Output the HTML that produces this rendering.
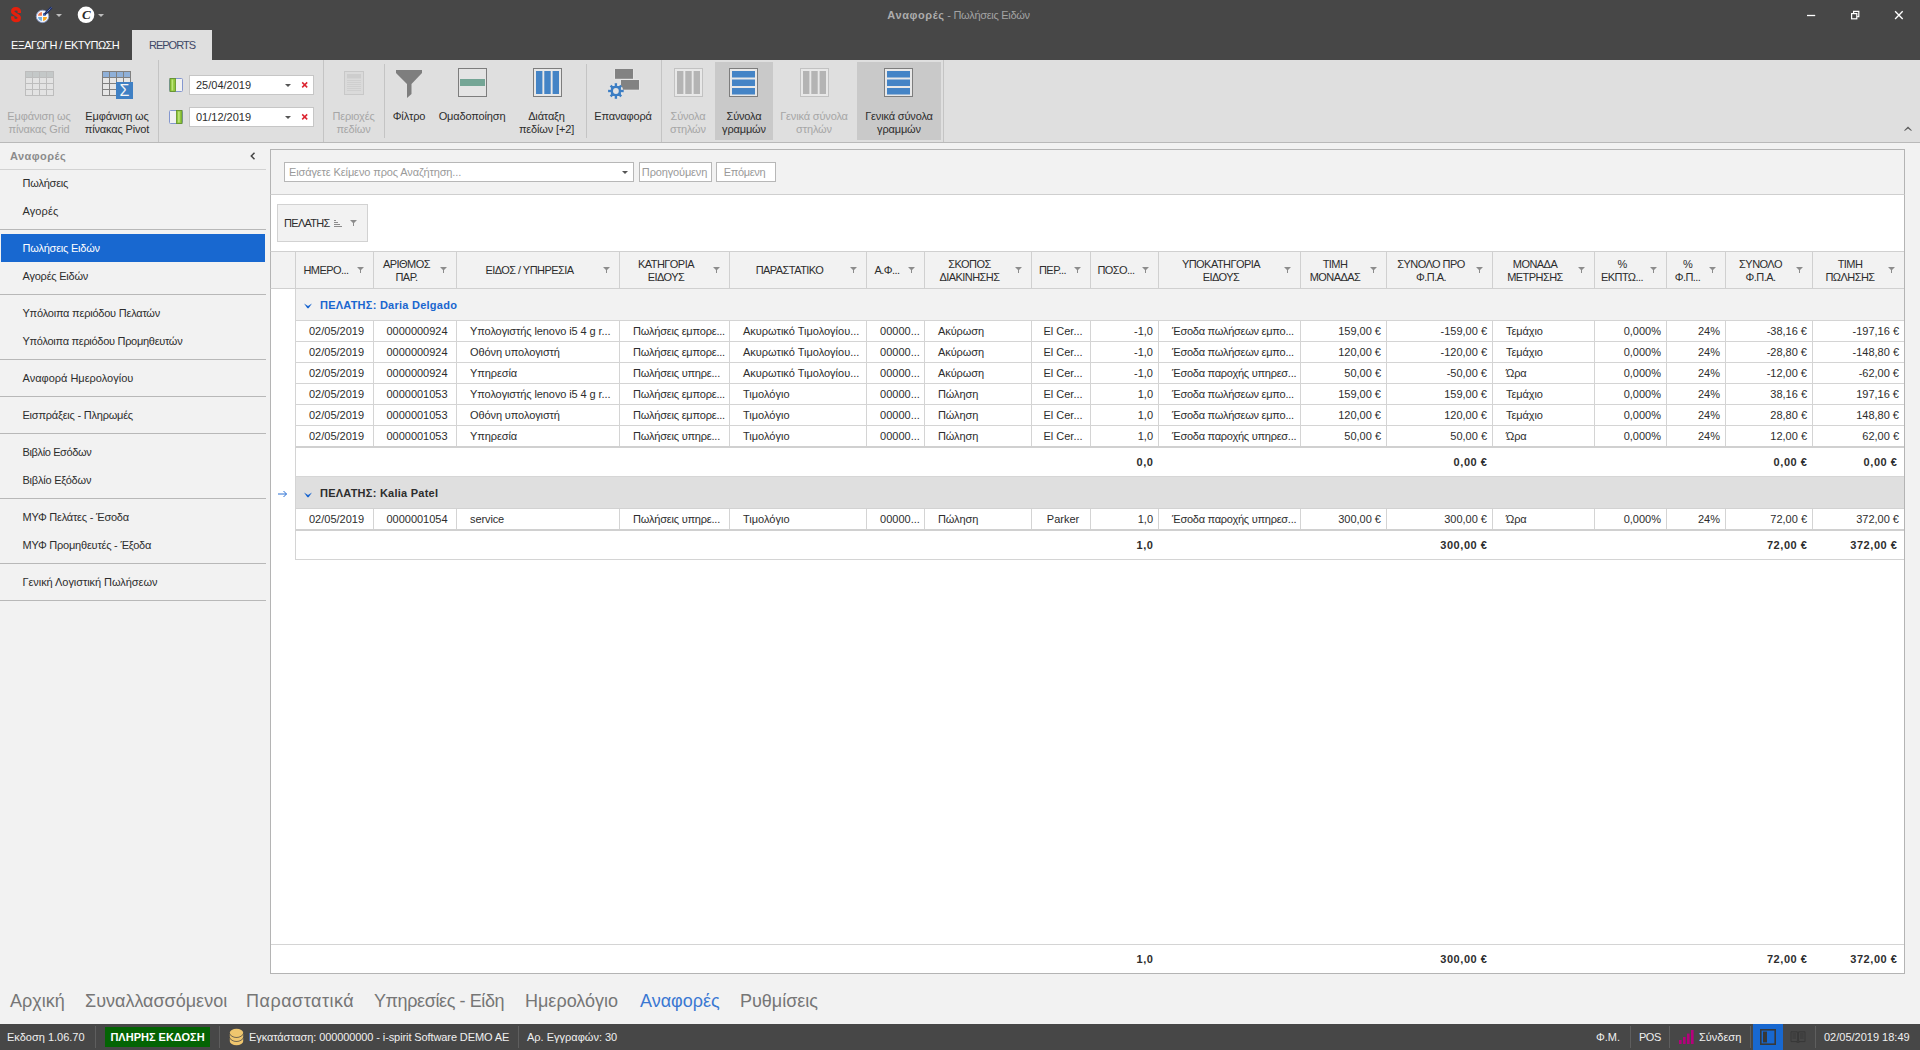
<!DOCTYPE html>
<html lang="el">
<head>
<meta charset="utf-8">
<title>Αναφορές - Πωλήσεις Ειδών</title>
<style>
html,body{margin:0;padding:0}
body{width:1920px;height:1050px;overflow:hidden;background:#f2f2f2;font-family:"Liberation Sans","DejaVu Sans",sans-serif;font-size:11px;color:#2d2d2d;position:relative;line-height:13px}
div,span,svg{box-sizing:border-box}
.abs{position:absolute}
/* ---------- title bar ---------- */
#title{position:absolute;left:0;top:0;width:1920px;height:60px;background:#474747}
#title .cap{position:absolute;left:0;width:1920px;top:9px;text-align:center;color:#a3a3a3;font-size:11px;padding-right:3px;letter-spacing:-0.3px}
#title .cap b{color:#adadad;letter-spacing:0.6px}
.tab1{position:absolute;left:11px;top:39px;color:#fff;font-size:11px;letter-spacing:-0.6px}
.tab2{position:absolute;left:132px;top:30px;width:80px;height:30px;background:#dfdfdf;color:#3d4766;text-align:center;padding-top:9px;font-size:11px;letter-spacing:-1px}
/* ---------- ribbon ---------- */
#ribbon{position:absolute;left:0;top:60px;width:1920px;height:83px;background:#dfdfdf;border-bottom:1px solid #b9b9b9}
.rsep{position:absolute;top:4px;height:74px;width:1px;background:#c4c4c4}
.rsep.full{top:0;height:82px}
.rb{position:absolute;top:2px;height:78px;text-align:center;color:#2d2d2d;white-space:nowrap}
.rb .lbl{position:absolute;left:-20px;right:-20px;top:48px;line-height:13px;letter-spacing:-0.15px}
.rb.dis{color:#a6a6a6}
.rb.chk{background:#c9c9c9}
.rb svg{position:absolute}
.rb.chk svg{transform:translateX(-1px)}
.dt{position:absolute;left:189px;width:125px;height:20px;background:#fff;border:1px solid #c6c6c6;padding:3px 0 0 6px;color:#2d2d2d}
.dt i{position:absolute;right:22px;top:8px;border:3px solid transparent;border-top:3px solid #555;border-bottom:0;width:0;height:0}
.dt u{position:absolute;right:4px;top:3px;width:9px;height:11px;text-decoration:none}
/* ---------- left nav ---------- */
#nav{position:absolute;left:0;top:143px;width:266px;height:830px}
#nav .hd{position:absolute;left:10px;top:7px;font-weight:bold;color:#8b8b8b;font-size:11px;letter-spacing:0.45px}
.ni{position:absolute;left:1px;width:264px;height:28px;padding:8px 0 0 21.5px;color:#2d2d2d;letter-spacing:-0.22px}
.ni.sel{background:#1868d0;color:#fff}
.ns{position:absolute;left:0;width:266px;height:1px;background:#b8b8b8}
.ns.first{background:#d2d2d2}
/* ---------- main panel ---------- */
#main{position:absolute;left:270px;top:149px;width:1635px;height:825px;background:#fff;border:1px solid #b4b4b4}
#find{position:absolute;left:270px;top:149px;width:1635px;height:46px;background:#f2f2f2;border:1px solid #b4b4b4;border-bottom:1px solid #cfcfcf}
.sin{position:absolute;left:284px;top:162px;width:350px;height:20px;background:#fff;border:1px solid #b7b7b7;color:#9a9a9a;padding:3px 0 0 4px;letter-spacing:-0.12px}
.sin i{position:absolute;right:5px;top:8px;border:3px solid transparent;border-top:3px solid #555;border-bottom:0}
.sbtn{position:absolute;top:162px;height:20px;background:#fff;border:1px solid #b7b7b7;color:#9a9a9a;text-align:center;padding-top:3px;letter-spacing:-0.15px}
.chip{position:absolute;left:277px;top:204px;width:91px;height:38px;background:#f2f2f2;border:1px solid #d2d2d2;padding:12px 0 0 6px;color:#2d2d2d;letter-spacing:-0.7px}
/* grid */
.hdr{position:absolute;left:270px;top:251px;width:1634px;height:38px;background:#f2f2f2;border-top:1px solid #d0d0d0;border-bottom:1px solid #d0d0d0;border-left:1px solid #b4b4b4}
.hc{position:absolute;top:0;height:36px;border-right:1px solid #d0d0d0;color:#2d2d2d}
.hc.ind{left:0;width:25px}
.hc.end,.dc.end{border-right:0}
.hc .ht{position:absolute;left:5px;right:22px;top:1px;letter-spacing:-0.55px;height:36px;display:flex;align-items:center;justify-content:center;text-align:center;line-height:13px;white-space:nowrap}
.hc .fl{position:absolute;right:9px;top:15px;width:7px;height:6px;fill:#8c8c8c}
.hc .ht.one{top:0}
.gr{position:absolute;left:295px;width:1609px;height:32px;border-left:1px solid #d4d4d4;border-bottom:1px solid #d4d4d4;font-weight:bold;padding:10px 0 0 24px;letter-spacing:0.25px}
.gr.g1{background:#f2f2f2;color:#1a66cf}
.gr.g2{background:#dfdfdf;color:#2d2d2d;height:33px;border-top:1px solid #d6d6d6;border-bottom:1px solid #d2d2d2}
.gr.g2 .chev{top:14.5px}
.gr .chev{position:absolute;left:8px;top:13.5px;width:8px;height:6px;fill:#1a66cf;stroke:none}
.rowarrow{position:absolute;left:278px;top:489.5px;width:10px;height:8px;fill:none;stroke:#2a70d4;stroke-width:1}
.dr{position:absolute;left:295px;width:1609px;height:21px;border-left:1px solid #d4d4d4;border-bottom:1px solid #d4d4d4;background:#fff}
.dr.last{height:22px;border-bottom:2px solid #d0d0d0}
.dc{position:absolute;top:0;height:20px;border-right:1px solid #d4d4d4;padding-top:4px;white-space:nowrap;overflow:hidden}
.dc.c{text-align:center;padding-left:4px}
.dc.l{text-align:left;padding-left:13px;letter-spacing:-0.1px}
.dc.r{text-align:right;padding-right:5px}
.gt{position:absolute;left:295px;width:1609px;height:28px;border-left:1px solid #d4d4d4;background:#fff;font-weight:bold}
.gt.g2t{border-bottom:1px solid #d4d4d4;height:29px}
.ft{position:absolute;left:271px;width:1633px;height:29px;border-top:1px solid #d4d4d4;background:#fff;font-weight:bold}
.tv{position:absolute;top:8px;letter-spacing:0.55px;margin-right:-0.5px}
.ft .tv{top:8px}
/* ---------- bottom nav ---------- */
.bn{position:absolute;top:990px;font-size:18px;line-height:22px;color:#767676;white-space:nowrap}
.bn.on{color:#3a78d2}
/* ---------- status ---------- */
#status{position:absolute;left:0;top:1024px;width:1920px;height:26px;background:#474747;color:#f0f0f0}
#status span{position:absolute;top:7px;white-space:nowrap}
#status .sp{position:absolute;top:2px;width:1px;height:22px;background:#5e5e5e}
#status .badge{left:105px;top:3px;width:105px;height:20px;background:#046404;color:#fff;font-weight:bold;text-align:center;padding-top:4px}
</style>
</head>
<body>
<!-- title bar -->
<div id="title">
  <div class="cap"><b>Αναφορές</b> - Πωλήσεις Ειδών</div>
  <div class="tab1">ΕΞΑΓΩΓΗ / ΕΚΤΥΠΩΣΗ</div>
  <div class="tab2">REPORTS</div>
  <svg class="abs" style="left:9px;top:5px" width="14" height="19" viewBox="0 0 14 19"><path d="M10.3 8.1V6.4C10.3 2.8 3.7 2.8 3.7 6.6C3.7 9.3 10.3 9.6 10.3 12.8C10.3 16.6 3.7 16.6 3.7 12.9V11.2" fill="none" stroke="#e5200c" stroke-width="3.4"/></svg><svg class="abs" style="left:34px;top:5px" width="20" height="20" viewBox="0 0 20 20"><circle cx="8.5" cy="11.4" r="6.2" fill="#f6f8fc" stroke="#8a9ccc" stroke-width="0.9"/><path d="M7.95 6.9V10.85H4A4.4 4.4 0 0 1 7.95 6.9Z" fill="#f07850"/><path d="M9.05 11.95H13A4.4 4.4 0 0 1 9.05 15.9Z" fill="#f7a623"/><path d="M7.95 11.95V15.9A4.4 4.4 0 0 1 4 11.95Z" fill="#6fb0e4"/><path d="M9.05 10.85V7.8L12.1 10.85Z" fill="#2a58b0"/><path d="M10.6 9.4L17.6 2.4" stroke="#1c2e6a" stroke-width="2.3"/><path d="M12.8 7.2L17.6 2.4" stroke="#a9bde6" stroke-width="0.9" stroke-dasharray="0.9 0.9"/></svg><svg class="abs" style="left:56px;top:14px" width="6" height="3" viewBox="0 0 6 3"><path d="M0 0H6L3 3Z" fill="#bdbdbd"/></svg><svg class="abs" style="left:77px;top:6px" width="18" height="18" viewBox="0 0 18 18"><circle cx="9" cy="8.8" r="8.3" fill="#fff"/><text x="9.3" y="13.4" font-family="Liberation Serif, serif" font-style="italic" font-weight="bold" font-size="13" fill="#2b2b2b" text-anchor="middle">C</text></svg><svg class="abs" style="left:98px;top:14px" width="6" height="3" viewBox="0 0 6 3"><path d="M0 0H6L3 3Z" fill="#bdbdbd"/></svg><svg class="abs" style="left:1806px;top:10px" width="100" height="11" viewBox="0 0 100 11"><g fill="none" stroke="#fff"><path d="M1 5.5H9.2" stroke-width="1.3"/><rect x="45.6" y="3.6" width="5.2" height="5.2" stroke-width="1.2"/><path d="M47.6 3.2V1.4H52.8V6.6H51.2" stroke-width="1.2"/><path d="M89.1 1.3L96.7 8.9M96.7 1.3L89.1 8.9" stroke-width="1.35"/></g></svg>
</div>
<!-- ribbon -->
<div id="ribbon">
  <div class="rsep full" style="left:158px"></div><div class="rsep full" style="left:323px"></div><div class="rsep" style="left:384px"></div><div class="rsep" style="left:586px"></div><div class="rsep full" style="left:661px"></div><div class="rsep full" style="left:943px"></div><div class="rb dis" style="left:6.0px;width:66px"><svg style="left:50%%;margin-left:-14.5px;top:9px" width="29" height="25" viewBox="0 0 29 25"><rect x="0.5" y="0.5" width="28" height="24" fill="#e3e3e3" stroke="#bdbdbd"/><rect x="1" y="1" width="27" height="5" fill="#c4c8c8"/><path d="M7.5 1V24" stroke="#bdbdbd"/><path d="M14.5 1V24" stroke="#bdbdbd"/><path d="M21.5 1V24" stroke="#bdbdbd"/><path d="M1 6.5H28" stroke="#bdbdbd"/><path d="M1 12.5H28" stroke="#bdbdbd"/><path d="M1 18.5H28" stroke="#bdbdbd"/></svg><div class="lbl">Εμφάνιση ως<br>πίνακας Grid</div></div><div class="rb " style="left:84.0px;width:66px"><svg style="left:50%;margin-left:-15.5px;top:9px" width="32" height="29" viewBox="0 0 32 29"><rect x="0.5" y="0.5" width="28" height="24" fill="#e6e6e6" stroke="#808080"/><rect x="1" y="1" width="27" height="5" fill="#8fb0d8"/><path d="M7.5 1V24M14.5 1V24M21.5 1V24M1 6.5H28M1 12.5H28M1 18.5H28" stroke="#808080" fill="none"/><rect x="14" y="11" width="17" height="17" fill="#3f80c4"/><text x="22.5" y="25" font-family="Liberation Sans, sans-serif" font-size="16" fill="#f4f4f4" text-anchor="middle">Σ</text></svg><div class="lbl">Εμφάνιση ως<br>πίνακας Pivot</div></div><div class="rb dis" style="left:330.5px;width:46px"><svg style="left:50%;margin-left:-10px;top:9px" width="20" height="24" viewBox="0 0 20 24"><rect x="0.5" y="0.5" width="19" height="23" fill="#dadada" stroke="#c8c8c8"/><rect x="3" y="3" width="14" height="4.5" fill="#cdcdcd"/><path d="M3 9.5H17M3 11.5H17M3 13.5H17M3 15.5H17M3 17.5H17M3 19.5H17" stroke="#cfcfcf"/></svg><div class="lbl">Περιοχές<br>πεδίων</div></div><div class="rb " style="left:389.0px;width:40px"><svg style="left:50%;margin-left:-13.5px;top:8px" width="26" height="28" viewBox="0 0 26 28"><path d="M0 0H26V3L15.5 14V24L11 28V14L0 3Z" fill="#7e7e7e"/></svg><div class="lbl">Φίλτρο</div></div><div class="rb " style="left:437.0px;width:70px"><svg style="left:50%;margin-left:-14px;top:6px" width="29" height="29" viewBox="0 0 29 29"><rect x="0.5" y="0.5" width="28" height="28" fill="#e4e4e4" stroke="#7d7d7d"/><rect x="2" y="11" width="25" height="7" fill="#74a595"/></svg><div class="lbl">Ομαδοποίηση</div></div><div class="rb " style="left:515.5px;width:62px"><svg style="left:50%;margin-left:-14px;top:6px" width="29" height="29" viewBox="0 0 29 29"><rect x="0.5" y="0.5" width="28" height="28" fill="#e8e8e8" stroke="#7d7d7d"/><rect x="3" y="3" width="6.4" height="23" fill="#4484c6"/><rect x="11.3" y="3" width="6.4" height="23" fill="#4484c6"/><rect x="19.6" y="3" width="6.4" height="23" fill="#4484c6"/></svg><div class="lbl">Διάταξη<br>πεδίων [+2]</div></div><div class="rb " style="left:590.0px;width:66px"><svg style="left:50%;margin-left:-16px;top:7px" width="33" height="30" viewBox="0 0 33 30"><rect x="7.4" y="-0.6" width="19.2" height="11" fill="#e9e9e9"/><rect x="13.4" y="10.4" width="19.2" height="10.9" fill="#e9e9e9"/><rect x="8" y="0" width="18" height="9.8" fill="#828282"/><rect x="14" y="11" width="18" height="9.7" fill="#828282"/><g transform="translate(8.9,22)" fill="#3c7ec4"><circle r="7.4" fill="#e5e5e5"/><rect x="-5" y="-5" width="10" height="10" rx="2.6"/><rect x="-1.2" y="-7.8" width="2.4" height="15.6"/><rect x="-1.2" y="-7.8" width="2.4" height="15.6" transform="rotate(90)"/><rect x="-1.2" y="-7.5" width="2.4" height="15" transform="rotate(45)"/><rect x="-1.2" y="-7.5" width="2.4" height="15" transform="rotate(135)"/><circle r="2.9" fill="#e2e2e2"/></g></svg><div class="lbl">Επαναφορά</div></div><div class="rb dis" style="left:665.0px;width:46px"><svg style="left:50%;margin-left:-14px;top:6px" width="29" height="29" viewBox="0 0 29 29"><rect x="0.5" y="0.5" width="28" height="28" fill="#e8e8e8" stroke="#c2c2c2"/><rect x="3" y="3" width="6.4" height="23" fill="#b4b4b4"/><rect x="11.3" y="3" width="6.4" height="23" fill="#b4b4b4"/><rect x="19.6" y="3" width="6.4" height="23" fill="#b4b4b4"/></svg><div class="lbl">Σύνολα<br>στηλών</div></div><div class="rb chk" style="left:715.0px;width:58px"><svg style="left:50%;margin-left:-14px;top:6px" width="29" height="29" viewBox="0 0 29 29"><rect x="0.5" y="0.5" width="28" height="28" fill="#e8e8e8" stroke="#7d7d7d"/><rect x="3" y="3" width="23" height="6.5" fill="#4484c6"/><rect x="3" y="11.5" width="23" height="6.5" fill="#4484c6"/><rect x="3" y="20" width="23" height="6.5" fill="#4484c6"/></svg><div class="lbl">Σύνολα<br>γραμμών</div></div><div class="rb dis" style="left:775.0px;width:78px"><svg style="left:50%;margin-left:-14px;top:6px" width="29" height="29" viewBox="0 0 29 29"><rect x="0.5" y="0.5" width="28" height="28" fill="#e8e8e8" stroke="#c2c2c2"/><rect x="3" y="3" width="6.4" height="23" fill="#b4b4b4"/><rect x="11.3" y="3" width="6.4" height="23" fill="#b4b4b4"/><rect x="19.6" y="3" width="6.4" height="23" fill="#b4b4b4"/></svg><div class="lbl">Γενικά σύνολα<br>στηλών</div></div><div class="rb chk" style="left:857.0px;width:84px"><svg style="left:50%;margin-left:-14px;top:6px" width="29" height="29" viewBox="0 0 29 29"><rect x="0.5" y="0.5" width="28" height="28" fill="#e8e8e8" stroke="#7d7d7d"/><rect x="3" y="3" width="23" height="6.5" fill="#4484c6"/><rect x="3" y="11.5" width="23" height="6.5" fill="#4484c6"/><rect x="3" y="20" width="23" height="6.5" fill="#4484c6"/></svg><div class="lbl">Γενικά σύνολα<br>γραμμών</div></div><svg class="abs" style="left:169px;top:18px" width="14" height="14" viewBox="0 0 14 14"><rect x="0.5" y="0.5" width="13" height="13" rx="1" fill="#f1f1f1" stroke="#8497cf"/><rect x="1" y="0.5" width="5.5" height="13" fill="#8fc63d" stroke="#5f8f22" stroke-width="0.8"/><rect x="2.6" y="1.5" width="1.6" height="11" fill="#bfe57a"/></svg><div class="dt" style="top:15px">25/04/2019<i></i><u><svg width="9" height="11" viewBox="0 0 9 11"><path d="M2.2 3.4L7.2 8.4M7.2 3.4L2.2 8.4" stroke="#dc2430" stroke-width="1.5" fill="none"/></svg></u></div><svg class="abs" style="left:169px;top:50px" width="14" height="14" viewBox="0 0 14 14"><rect x="0.5" y="0.5" width="13" height="13" rx="1" fill="#f1f1f1" stroke="#8497cf"/><rect x="7.5" y="0.5" width="5.5" height="13" fill="#8fc63d" stroke="#5f8f22" stroke-width="0.8"/><rect x="9.1" y="1.5" width="1.6" height="11" fill="#bfe57a"/></svg><div class="dt" style="top:47px">01/12/2019<i></i><u><svg width="9" height="11" viewBox="0 0 9 11"><path d="M2.2 3.4L7.2 8.4M7.2 3.4L2.2 8.4" stroke="#dc2430" stroke-width="1.5" fill="none"/></svg></u></div><svg class="abs" style="left:1904px;top:66px" width="8" height="5" viewBox="0 0 8 5"><path d="M0 4.6L4 0.4L8 4.6L7 4.8L4 2.4L1 4.8Z" fill="#5a5a5a"/></svg>
</div>
<!-- left nav -->
<div id="nav">
  <div class="hd">Αναφορές</div>
  <svg class="abs" style="left:250px;top:9px" width="6" height="8" viewBox="0 0 6 8"><path d="M4.5 0.8L1.3 4L4.5 7.2" fill="none" stroke="#444" stroke-width="1.5"/></svg><div class="ni" style="top:26px">Πωλήσεις</div><div class="ni" style="top:54px;letter-spacing:0.11px">Αγορές</div><div class="ni sel" style="top:91px">Πωλήσεις Ειδών</div><div class="ni" style="top:119px">Αγορές Ειδών</div><div class="ni" style="top:156px">Υπόλοιπα περιόδου Πελατών</div><div class="ni" style="top:184px;letter-spacing:-0.29px">Υπόλοιπα περιόδου Προμηθευτών</div><div class="ni" style="top:221px;letter-spacing:0px">Αναφορά Ημερολογίου</div><div class="ni" style="top:258px">Εισπράξεις - Πληρωμές</div><div class="ni" style="top:295px;letter-spacing:-0.37px">Βιβλίο Εσόδων</div><div class="ni" style="top:323px">Βιβλίο Εξόδων</div><div class="ni" style="top:360px">ΜΥΦ Πελάτες - Έσοδα</div><div class="ni" style="top:388px">ΜΥΦ Προμηθευτές - Έξοδα</div><div class="ni" style="top:425px;letter-spacing:-0.06px">Γενική Λογιστική Πωλήσεων</div><div class="ns first" style="top:26px"></div><div class="ns" style="top:86px"></div><div class="ns" style="top:151px"></div><div class="ns" style="top:216px"></div><div class="ns" style="top:253px"></div><div class="ns" style="top:290px"></div><div class="ns" style="top:355px"></div><div class="ns" style="top:420px"></div><div class="ns" style="top:457px"></div>
</div>
<!-- main -->
<div id="main"></div>
<div id="find"></div>
<div class="sin">Εισάγετε Κείμενο προς Αναζήτηση...<i></i></div>
<div class="sbtn" style="left:639px;width:73px;padding-right:2px">Προηγούμενη</div>
<div class="sbtn" style="left:716px;width:60px;letter-spacing:-0.35px;padding-right:3px">Επόμενη</div>
<div class="chip">ΠΕΛΑΤΗΣ<svg class="abs" style="left:56px;top:15px" width="8" height="8" viewBox="0 0 8 8"><path d="M0 0.5H2M0 2.5H4M0 4.5H6M0 6.5H8" stroke="#8c8c8c" fill="none"/></svg><svg class="abs" style="left:72px;top:15px" width="7" height="6" viewBox="0 0 7 6"><path d="M0 0H7L4 3V6H3V3Z" fill="#8c8c8c"/></svg></div>
<div class="hdr"><div class="hc ind"></div><div class="hc" style="left:25px;width:78px"><div class="ht one">ΗΜΕΡΟ...</div><svg class="fl" viewBox="0 0 7 6"><path d="M0 0H7L4 3V6H3V3Z"/></svg></div><div class="hc" style="left:103px;width:83px"><div class="ht">ΑΡΙΘΜΟΣ<br>ΠΑΡ.</div><svg class="fl" viewBox="0 0 7 6"><path d="M0 0H7L4 3V6H3V3Z"/></svg></div><div class="hc" style="left:186px;width:163px"><div class="ht one">ΕΙΔΟΣ / ΥΠΗΡΕΣΙΑ</div><svg class="fl" viewBox="0 0 7 6"><path d="M0 0H7L4 3V6H3V3Z"/></svg></div><div class="hc" style="left:349px;width:110px"><div class="ht">ΚΑΤΗΓΟΡΙΑ<br>ΕΙΔΟΥΣ</div><svg class="fl" viewBox="0 0 7 6"><path d="M0 0H7L4 3V6H3V3Z"/></svg></div><div class="hc" style="left:459px;width:137px"><div class="ht one">ΠΑΡΑΣΤΑΤΙΚΟ</div><svg class="fl" viewBox="0 0 7 6"><path d="M0 0H7L4 3V6H3V3Z"/></svg></div><div class="hc" style="left:596px;width:58px"><div class="ht one">Α.Φ...</div><svg class="fl" viewBox="0 0 7 6"><path d="M0 0H7L4 3V6H3V3Z"/></svg></div><div class="hc" style="left:654px;width:107px"><div class="ht">ΣΚΟΠΟΣ<br>ΔΙΑΚΙΝΗΣΗΣ</div><svg class="fl" viewBox="0 0 7 6"><path d="M0 0H7L4 3V6H3V3Z"/></svg></div><div class="hc" style="left:761px;width:59px"><div class="ht one">ΠΕΡ...</div><svg class="fl" viewBox="0 0 7 6"><path d="M0 0H7L4 3V6H3V3Z"/></svg></div><div class="hc" style="left:820px;width:68px"><div class="ht one">ΠΟΣΟ...</div><svg class="fl" viewBox="0 0 7 6"><path d="M0 0H7L4 3V6H3V3Z"/></svg></div><div class="hc" style="left:888px;width:142px"><div class="ht">ΥΠΟΚΑΤΗΓΟΡΙΑ<br>ΕΙΔΟΥΣ</div><svg class="fl" viewBox="0 0 7 6"><path d="M0 0H7L4 3V6H3V3Z"/></svg></div><div class="hc" style="left:1030px;width:86px"><div class="ht">ΤΙΜΗ<br>ΜΟΝΑΔΑΣ</div><svg class="fl" viewBox="0 0 7 6"><path d="M0 0H7L4 3V6H3V3Z"/></svg></div><div class="hc" style="left:1116px;width:106px"><div class="ht">ΣΥΝΟΛΟ ΠΡΟ<br>Φ.Π.Α.</div><svg class="fl" viewBox="0 0 7 6"><path d="M0 0H7L4 3V6H3V3Z"/></svg></div><div class="hc" style="left:1222px;width:102px"><div class="ht">ΜΟΝΑΔΑ<br>ΜΕΤΡΗΣΗΣ</div><svg class="fl" viewBox="0 0 7 6"><path d="M0 0H7L4 3V6H3V3Z"/></svg></div><div class="hc" style="left:1324px;width:72px"><div class="ht">%<br>ΕΚΠΤΩ...</div><svg class="fl" viewBox="0 0 7 6"><path d="M0 0H7L4 3V6H3V3Z"/></svg></div><div class="hc" style="left:1396px;width:59px"><div class="ht">%<br>Φ.Π...</div><svg class="fl" viewBox="0 0 7 6"><path d="M0 0H7L4 3V6H3V3Z"/></svg></div><div class="hc" style="left:1455px;width:87px"><div class="ht">ΣΥΝΟΛΟ<br>Φ.Π.Α.</div><svg class="fl" viewBox="0 0 7 6"><path d="M0 0H7L4 3V6H3V3Z"/></svg></div><div class="hc end" style="left:1542px;width:91px"><div class="ht">ΤΙΜΗ<br>ΠΩΛΗΣΗΣ</div><svg class="fl" viewBox="0 0 7 6"><path d="M0 0H7L4 3V6H3V3Z"/></svg></div></div><div class="gr g1" style="top:289px"><svg class="chev" viewBox="0 0 8 6"><path d="M0 0.6L4 2.9L8 0.6L4.6 5.2H3.4Z"/></svg><span>ΠΕΛΑΤΗΣ: Daria Delgado</span></div><div class="dr" style="top:321px"><div class="dc c" style="left:0px;width:78px"><span>02/05/2019</span></div><div class="dc c" style="left:78px;width:83px"><span>0000000924</span></div><div class="dc l" style="left:161px;width:163px"><span>Υπολογιστής lenovo i5 4 g r...</span></div><div class="dc l" style="left:324px;width:110px;letter-spacing:-0.2px"><span>Πωλήσεις εμπορε...</span></div><div class="dc l" style="left:434px;width:137px;letter-spacing:0"><span>Ακυρωτικό Τιμολογίου...</span></div><div class="dc c" style="left:571px;width:58px;padding-left:9px"><span>00000...</span></div><div class="dc l" style="left:629px;width:107px"><span>Ακύρωση</span></div><div class="dc c" style="left:736px;width:59px"><span>El Cer...</span></div><div class="dc r" style="left:795px;width:68px"><span>-1,0</span></div><div class="dc l" style="left:863px;width:142px;letter-spacing:-0.25px"><span>Έσοδα πωλήσεων εμπο...</span></div><div class="dc r" style="left:1005px;width:86px"><span>159,00 €</span></div><div class="dc r" style="left:1091px;width:106px"><span>-159,00 €</span></div><div class="dc l" style="left:1197px;width:102px"><span>Τεμάχιο</span></div><div class="dc r" style="left:1299px;width:72px"><span>0,000%</span></div><div class="dc r" style="left:1371px;width:59px"><span>24%</span></div><div class="dc r" style="left:1430px;width:87px"><span>-38,16 €</span></div><div class="dc r end" style="left:1517px;width:91px"><span>-197,16 €</span></div></div><div class="dr" style="top:342px"><div class="dc c" style="left:0px;width:78px"><span>02/05/2019</span></div><div class="dc c" style="left:78px;width:83px"><span>0000000924</span></div><div class="dc l" style="left:161px;width:163px"><span>Οθόνη υπολογιστή</span></div><div class="dc l" style="left:324px;width:110px;letter-spacing:-0.2px"><span>Πωλήσεις εμπορε...</span></div><div class="dc l" style="left:434px;width:137px;letter-spacing:0"><span>Ακυρωτικό Τιμολογίου...</span></div><div class="dc c" style="left:571px;width:58px;padding-left:9px"><span>00000...</span></div><div class="dc l" style="left:629px;width:107px"><span>Ακύρωση</span></div><div class="dc c" style="left:736px;width:59px"><span>El Cer...</span></div><div class="dc r" style="left:795px;width:68px"><span>-1,0</span></div><div class="dc l" style="left:863px;width:142px;letter-spacing:-0.25px"><span>Έσοδα πωλήσεων εμπο...</span></div><div class="dc r" style="left:1005px;width:86px"><span>120,00 €</span></div><div class="dc r" style="left:1091px;width:106px"><span>-120,00 €</span></div><div class="dc l" style="left:1197px;width:102px"><span>Τεμάχιο</span></div><div class="dc r" style="left:1299px;width:72px"><span>0,000%</span></div><div class="dc r" style="left:1371px;width:59px"><span>24%</span></div><div class="dc r" style="left:1430px;width:87px"><span>-28,80 €</span></div><div class="dc r end" style="left:1517px;width:91px"><span>-148,80 €</span></div></div><div class="dr" style="top:363px"><div class="dc c" style="left:0px;width:78px"><span>02/05/2019</span></div><div class="dc c" style="left:78px;width:83px"><span>0000000924</span></div><div class="dc l" style="left:161px;width:163px"><span>Υπηρεσία</span></div><div class="dc l" style="left:324px;width:110px;letter-spacing:-0.2px"><span>Πωλήσεις υπηρε...</span></div><div class="dc l" style="left:434px;width:137px;letter-spacing:0"><span>Ακυρωτικό Τιμολογίου...</span></div><div class="dc c" style="left:571px;width:58px;padding-left:9px"><span>00000...</span></div><div class="dc l" style="left:629px;width:107px"><span>Ακύρωση</span></div><div class="dc c" style="left:736px;width:59px"><span>El Cer...</span></div><div class="dc r" style="left:795px;width:68px"><span>-1,0</span></div><div class="dc l" style="left:863px;width:142px;letter-spacing:-0.25px"><span>Έσοδα παροχής υπηρεσ...</span></div><div class="dc r" style="left:1005px;width:86px"><span>50,00 €</span></div><div class="dc r" style="left:1091px;width:106px"><span>-50,00 €</span></div><div class="dc l" style="left:1197px;width:102px"><span>Ώρα</span></div><div class="dc r" style="left:1299px;width:72px"><span>0,000%</span></div><div class="dc r" style="left:1371px;width:59px"><span>24%</span></div><div class="dc r" style="left:1430px;width:87px"><span>-12,00 €</span></div><div class="dc r end" style="left:1517px;width:91px"><span>-62,00 €</span></div></div><div class="dr" style="top:384px"><div class="dc c" style="left:0px;width:78px"><span>02/05/2019</span></div><div class="dc c" style="left:78px;width:83px"><span>0000001053</span></div><div class="dc l" style="left:161px;width:163px"><span>Υπολογιστής lenovo i5 4 g r...</span></div><div class="dc l" style="left:324px;width:110px;letter-spacing:-0.2px"><span>Πωλήσεις εμπορε...</span></div><div class="dc l" style="left:434px;width:137px;letter-spacing:0"><span>Τιμολόγιο</span></div><div class="dc c" style="left:571px;width:58px;padding-left:9px"><span>00000...</span></div><div class="dc l" style="left:629px;width:107px"><span>Πώληση</span></div><div class="dc c" style="left:736px;width:59px"><span>El Cer...</span></div><div class="dc r" style="left:795px;width:68px"><span>1,0</span></div><div class="dc l" style="left:863px;width:142px;letter-spacing:-0.25px"><span>Έσοδα πωλήσεων εμπο...</span></div><div class="dc r" style="left:1005px;width:86px"><span>159,00 €</span></div><div class="dc r" style="left:1091px;width:106px"><span>159,00 €</span></div><div class="dc l" style="left:1197px;width:102px"><span>Τεμάχιο</span></div><div class="dc r" style="left:1299px;width:72px"><span>0,000%</span></div><div class="dc r" style="left:1371px;width:59px"><span>24%</span></div><div class="dc r" style="left:1430px;width:87px"><span>38,16 €</span></div><div class="dc r end" style="left:1517px;width:91px"><span>197,16 €</span></div></div><div class="dr" style="top:405px"><div class="dc c" style="left:0px;width:78px"><span>02/05/2019</span></div><div class="dc c" style="left:78px;width:83px"><span>0000001053</span></div><div class="dc l" style="left:161px;width:163px"><span>Οθόνη υπολογιστή</span></div><div class="dc l" style="left:324px;width:110px;letter-spacing:-0.2px"><span>Πωλήσεις εμπορε...</span></div><div class="dc l" style="left:434px;width:137px;letter-spacing:0"><span>Τιμολόγιο</span></div><div class="dc c" style="left:571px;width:58px;padding-left:9px"><span>00000...</span></div><div class="dc l" style="left:629px;width:107px"><span>Πώληση</span></div><div class="dc c" style="left:736px;width:59px"><span>El Cer...</span></div><div class="dc r" style="left:795px;width:68px"><span>1,0</span></div><div class="dc l" style="left:863px;width:142px;letter-spacing:-0.25px"><span>Έσοδα πωλήσεων εμπο...</span></div><div class="dc r" style="left:1005px;width:86px"><span>120,00 €</span></div><div class="dc r" style="left:1091px;width:106px"><span>120,00 €</span></div><div class="dc l" style="left:1197px;width:102px"><span>Τεμάχιο</span></div><div class="dc r" style="left:1299px;width:72px"><span>0,000%</span></div><div class="dc r" style="left:1371px;width:59px"><span>24%</span></div><div class="dc r" style="left:1430px;width:87px"><span>28,80 €</span></div><div class="dc r end" style="left:1517px;width:91px"><span>148,80 €</span></div></div><div class="dr last" style="top:426px"><div class="dc c" style="left:0px;width:78px"><span>02/05/2019</span></div><div class="dc c" style="left:78px;width:83px"><span>0000001053</span></div><div class="dc l" style="left:161px;width:163px"><span>Υπηρεσία</span></div><div class="dc l" style="left:324px;width:110px;letter-spacing:-0.2px"><span>Πωλήσεις υπηρε...</span></div><div class="dc l" style="left:434px;width:137px;letter-spacing:0"><span>Τιμολόγιο</span></div><div class="dc c" style="left:571px;width:58px;padding-left:9px"><span>00000...</span></div><div class="dc l" style="left:629px;width:107px"><span>Πώληση</span></div><div class="dc c" style="left:736px;width:59px"><span>El Cer...</span></div><div class="dc r" style="left:795px;width:68px"><span>1,0</span></div><div class="dc l" style="left:863px;width:142px;letter-spacing:-0.25px"><span>Έσοδα παροχής υπηρεσ...</span></div><div class="dc r" style="left:1005px;width:86px"><span>50,00 €</span></div><div class="dc r" style="left:1091px;width:106px"><span>50,00 €</span></div><div class="dc l" style="left:1197px;width:102px"><span>Ώρα</span></div><div class="dc r" style="left:1299px;width:72px"><span>0,000%</span></div><div class="dc r" style="left:1371px;width:59px"><span>24%</span></div><div class="dc r" style="left:1430px;width:87px"><span>12,00 €</span></div><div class="dc r end" style="left:1517px;width:91px"><span>62,00 €</span></div></div><div class="gt" style="top:448px"><span class="tv" style="right:751px">0,0</span><span class="tv" style="right:417px">0,00 €</span><span class="tv" style="right:97px">0,00 €</span><span class="tv" style="right:7px">0,00 €</span></div><div class="gr g2" style="top:476px"><svg class="chev" viewBox="0 0 8 6"><path d="M0 0.6L4 2.9L8 0.6L4.6 5.2H3.4Z"/></svg><span>ΠΕΛΑΤΗΣ: Kalia Patel</span></div><svg class="rowarrow" viewBox="0 0 10 8"><path d="M0 4h8.5M5.5 1L8.5 4L5.5 7"/></svg><div class="dr last" style="top:509px"><div class="dc c" style="left:0px;width:78px"><span>02/05/2019</span></div><div class="dc c" style="left:78px;width:83px"><span>0000001054</span></div><div class="dc l" style="left:161px;width:163px"><span>service</span></div><div class="dc l" style="left:324px;width:110px;letter-spacing:-0.2px"><span>Πωλήσεις υπηρε...</span></div><div class="dc l" style="left:434px;width:137px;letter-spacing:0"><span>Τιμολόγιο</span></div><div class="dc c" style="left:571px;width:58px;padding-left:9px"><span>00000...</span></div><div class="dc l" style="left:629px;width:107px"><span>Πώληση</span></div><div class="dc c" style="left:736px;width:59px"><span>Parker</span></div><div class="dc r" style="left:795px;width:68px"><span>1,0</span></div><div class="dc l" style="left:863px;width:142px;letter-spacing:-0.25px"><span>Έσοδα παροχής υπηρεσ...</span></div><div class="dc r" style="left:1005px;width:86px"><span>300,00 €</span></div><div class="dc r" style="left:1091px;width:106px"><span>300,00 €</span></div><div class="dc l" style="left:1197px;width:102px"><span>Ώρα</span></div><div class="dc r" style="left:1299px;width:72px"><span>0,000%</span></div><div class="dc r" style="left:1371px;width:59px"><span>24%</span></div><div class="dc r" style="left:1430px;width:87px"><span>72,00 €</span></div><div class="dc r end" style="left:1517px;width:91px"><span>372,00 €</span></div></div><div class="gt g2t" style="top:531px"><span class="tv" style="right:751px">1,0</span><span class="tv" style="right:417px">300,00 €</span><span class="tv" style="right:97px">72,00 €</span><span class="tv" style="right:7px">372,00 €</span></div><div class="ft" style="top:944px"><span class="tv" style="right:751px">1,0</span><span class="tv" style="right:417px">300,00 €</span><span class="tv" style="right:97px">72,00 €</span><span class="tv" style="right:7px">372,00 €</span></div>
<!-- bottom nav -->
<div class="bn" style="left:10px">Αρχική</div>
<div class="bn" style="left:85px">Συναλλασσόμενοι</div>
<div class="bn" style="left:246px;letter-spacing:0.5px">Παραστατικά</div>
<div class="bn" style="left:374px;letter-spacing:-0.4px">Υπηρεσίες - Είδη</div>
<div class="bn" style="left:525px">Ημερολόγιο</div>
<div class="bn on" style="left:640px">Αναφορές</div>
<div class="bn" style="left:740px">Ρυθμίσεις</div>
<!-- status -->
<div id="status">
  <span style="left:7px">Εκδοση 1.06.70</span>
  <div class="sp" style="left:95px"></div>
  <span class="badge">ΠΛΗΡΗΣ ΕΚΔΟΣΗ</span>
  <div class="sp" style="left:219px"></div>
  <span style="left:249px;letter-spacing:-0.1px">Εγκατάσταση: 000000000 - i-spirit Software DEMO AE</span>
  <div class="sp" style="left:518px"></div>
  <span style="left:527px">Αρ. Εγγραφών: 30</span>
  <span style="left:1596px">Φ.Μ.</span>
  <div class="sp" style="left:1630px"></div>
  <span style="left:1639px;letter-spacing:-0.5px">POS</span>
  <div class="sp" style="left:1669px"></div>
  <span style="left:1699px">Σύνδεση</span>
  <div class="sp" style="left:1750px"></div>
  <div class="sp" style="left:1815px"></div>
  <span style="left:1824px">02/05/2019 18:49</span>
  <svg class="abs" style="left:229px;top:4px" width="15" height="18" viewBox="0 0 15 18"><g fill="#efc66e"><path d="M0.8 9.7A6.7 4.1 0 0 0 14.2 9.7V13.2A6.7 4.1 0 0 1 0.8 13.2Z"/><path d="M0.8 5.7A6.7 4.1 0 0 0 14.2 5.7V8.8A6.7 4.1 0 0 1 0.8 8.8Z"/><ellipse cx="7.5" cy="4.8" rx="6.7" ry="4.1"/></g></svg><svg class="abs" style="left:1678px;top:6px" width="16" height="14" viewBox="0 0 16 14"><g fill="#b6007c"><rect x="1" y="10" width="2.6" height="4"/><rect x="5" y="7" width="2.6" height="7"/><rect x="9" y="3.6" width="2.6" height="10.4"/><rect x="13" y="0" width="2.6" height="14"/></g></svg><div class="abs" style="left:1753px;top:0;width:30px;height:26px;background:#1868d0"></div><svg class="abs" style="left:1760px;top:5px" width="16" height="16" viewBox="0 0 16 16"><rect x="0.8" y="0.8" width="14.4" height="14.4" fill="none" stroke="#383838" stroke-width="1.6"/><rect x="3" y="2.6" width="4" height="10.8" fill="#383838"/></svg><svg class="abs" style="left:1790px;top:7px" width="16" height="12" viewBox="0 0 16 12"><g fill="none" stroke="#383838" stroke-width="1"><path d="M1 0.8H7.4V10.6H1ZM8.6 0.8H15V10.6H8.6Z"/><path d="M2.4 3H6M2.4 5H6M2.4 7H6M10 3H13.6M10 5H13.6M10 7H13.6M6.6 11.4H9.4"/></g></svg>
</div>
</body>
</html>
